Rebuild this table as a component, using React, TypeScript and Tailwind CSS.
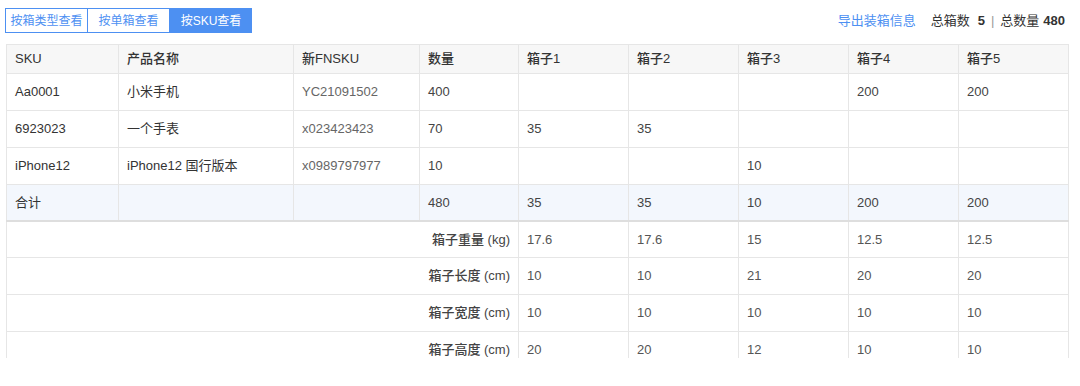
import React from "react";

const font = { fontFamily: '"Liberation Sans", "Noto Sans CJK SC", sans-serif' };

const rows = [
  { sku: "Aa0001", name: "小米手机", fn: "YC21091502", qty: "400", boxes: ["", "", "", "200", "200"] },
  { sku: "6923023", name: "一个手表", fn: "x023423423", qty: "70", boxes: ["35", "35", "", "", ""] },
  { sku: "iPhone12", name: "iPhone12 国行版本", fn: "x0989797977", qty: "10", boxes: ["", "", "10", "", ""] },
];

const dims = [
  { label: "箱子重量 (kg)", vals: ["17.6", "17.6", "15", "12.5", "12.5"] },
  { label: "箱子长度 (cm)", vals: ["10", "10", "21", "20", "20"] },
  { label: "箱子宽度 (cm)", vals: ["10", "10", "10", "10", "10"] },
  { label: "箱子高度 (cm)", vals: ["20", "20", "12", "10", "10"] },
];

export default function App() {
  const td = "border border-[#e6e6e6] px-2 text-left align-middle";
  return (
    <div className="w-[1080px] h-[386px] bg-white text-[13px] text-[#444]" style={font}>
      <div className="flex items-center justify-between pl-[5px] pr-[15px] pt-[8px]">
        <div className="flex h-[25px]">
          <button className="w-[83px] h-[25px] border border-[#4d90f2] text-[#4d90f2] text-[12px] flex items-center justify-center">按箱类型查看</button>
          <button className="w-[82px] h-[25px] border border-l-0 border-[#4d90f2] text-[#4d90f2] text-[12px] flex items-center justify-center">按单箱查看</button>
          <button className="w-[82px] h-[25px] bg-[#4d90f2] border border-[#4d90f2] text-white text-[12px] flex items-center justify-center">按SKU查看</button>
        </div>
        <div className="flex items-center text-[13px]">
          <span className="text-[#4d90f2]">导出装箱信息</span>
          <span className="ml-[15px] text-[#333]">总箱数</span>
          <span className="ml-[8px] font-bold text-[#333]">5</span>
          <span className="mx-[6px] text-[#999]">|</span>
          <span className="text-[#333]">总数量</span>
          <span className="ml-[4px] font-bold text-[#333]">480</span>
        </div>
      </div>
      <div className="mt-[11px] ml-[6px] w-[1063px] h-[314px] overflow-hidden">
        <table className="w-[1063px] table-fixed border-collapse">
          <colgroup>
            <col className="w-[112px]" />
            <col className="w-[175px]" />
            <col className="w-[126px]" />
            <col className="w-[99px]" />
            <col className="w-[110px]" />
            <col className="w-[110px]" />
            <col className="w-[110px]" />
            <col className="w-[110px]" />
            <col className="w-[110px]" />
          </colgroup>
          <thead>
            <tr className="h-[29px] bg-[#f7f7f7]">
              {["SKU", "产品名称", "新FNSKU", "数量", "箱子1", "箱子2", "箱子3", "箱子4", "箱子5"].map((h) => (
                <th key={h} className={`${td} font-medium text-[#333]`}>{h}</th>
              ))}
            </tr>
          </thead>
          <tbody>
            {rows.map((r) => (
              <tr key={r.sku} className="h-[37px]">
                <td className={`${td} text-[#333]`}>{r.sku}</td>
                <td className={`${td} text-[#333]`}>{r.name}</td>
                <td className={`${td} text-[#666]`}>{r.fn}</td>
                <td className={`${td} text-[#444]`}>{r.qty}</td>
                {r.boxes.map((b, i) => (
                  <td key={i} className={`${td} text-[#444]`}>{b}</td>
                ))}
              </tr>
            ))}
            <tr className="h-[36px] bg-[#f3f7fd]">
              <td className={`${td} border-b-2 border-b-[#dedede] text-[#333]`}>合计</td>
              <td className={`${td} border-b-2 border-b-[#dedede]`}></td>
              <td className={`${td} border-b-2 border-b-[#dedede]`}></td>
              <td className={`${td} border-b-2 border-b-[#dedede]`}>480</td>
              {["35", "35", "10", "200", "200"].map((v, i) => (
                <td key={i} className={`${td} border-b-2 border-b-[#dedede]`}>{v}</td>
              ))}
            </tr>
            {dims.map((d) => (
              <tr key={d.label} className="h-[37px]">
                <td colSpan={4} className={`${td} text-right font-medium text-[#444]`}>{d.label}</td>
                {d.vals.map((v, i) => (
                  <td key={i} className={`${td} text-[#555]`}>{v}</td>
                ))}
              </tr>
            ))}
          </tbody>
        </table>
      </div>
    </div>
  );
}
